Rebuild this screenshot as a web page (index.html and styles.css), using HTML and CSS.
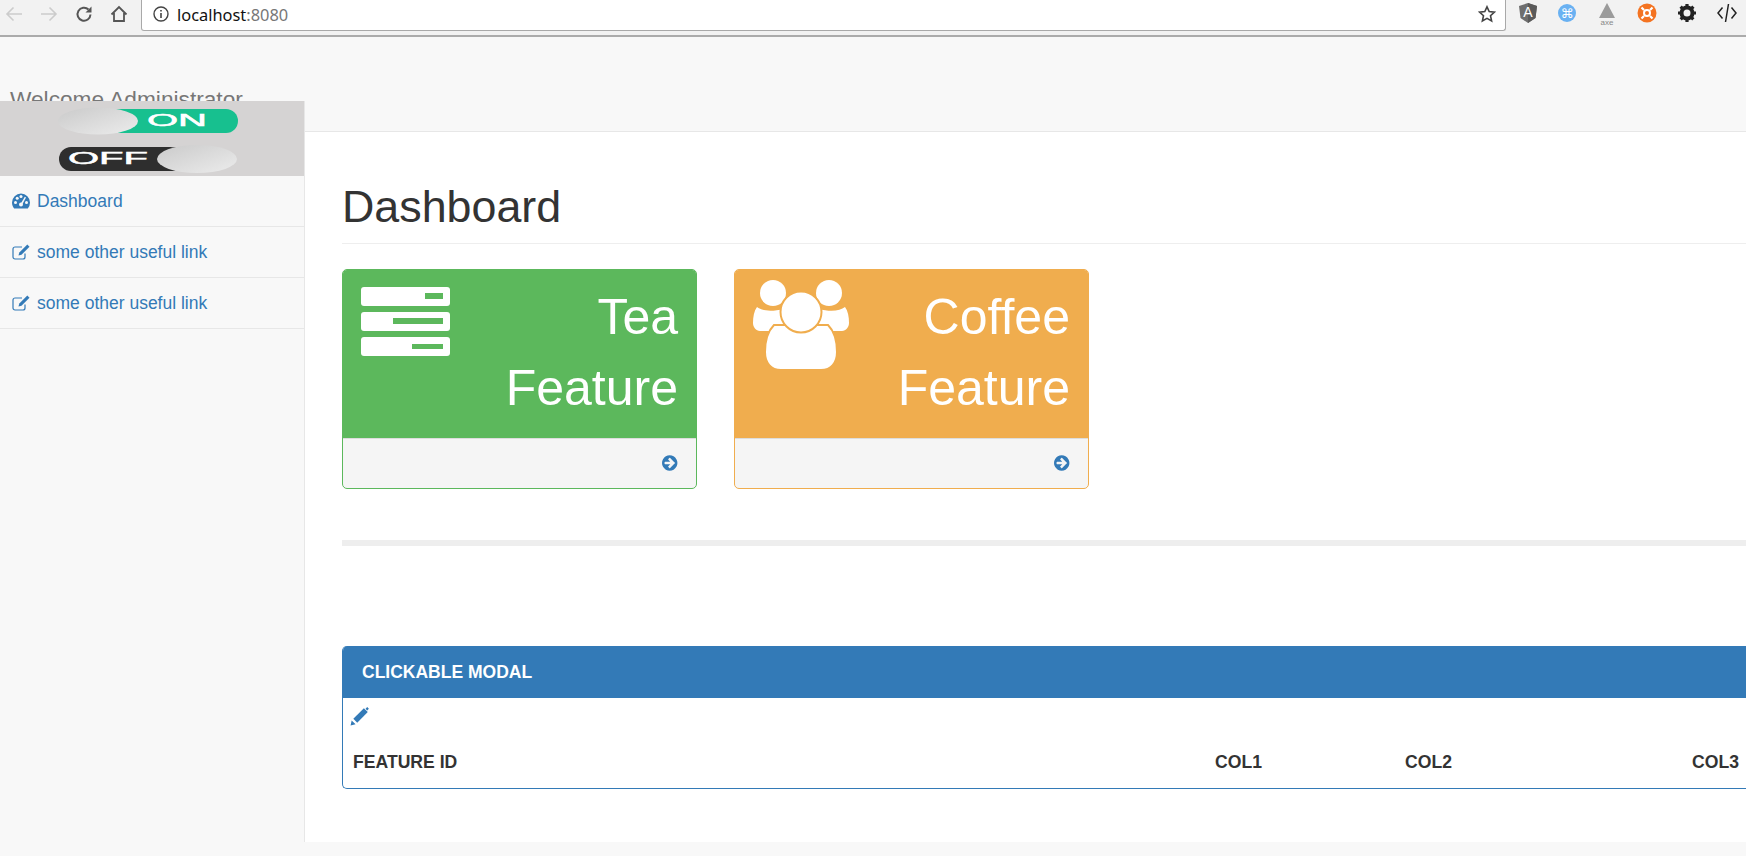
FILE: index.html
```html
<!DOCTYPE html>
<html lang="en">
<head>
    <meta charset="UTF-8">
    <meta name="viewport" content="width=device-width, initial-scale=1.0">
    <title>Dashboard</title>
    <link rel="stylesheet" href="styles.css">
</head>
<body>
    <div class="browser-bar">
        <div class="browser-nav">
            <svg width="18" height="18" viewBox="0 0 18 18"><path d="M17 9H2M8.5 2.5 2 9l6.5 6.5" fill="none" stroke="#ccc" stroke-width="1.6"/></svg>
            <svg width="18" height="18" viewBox="0 0 18 18"><path d="M1 9h15M9.5 2.5 16 9l-6.5 6.5" fill="none" stroke="#ccc" stroke-width="1.6"/></svg>
            <svg width="18" height="18" viewBox="0 0 18 18"><path d="M15.5 9.5a6.5 6.5 0 1 1-2-5" fill="none" stroke="#555" stroke-width="2"/><path d="M16.5 1.5v6h-6z" fill="#555"/></svg>
            <svg width="18" height="18" viewBox="0 0 18 18"><path d="M1.5 9.5 9 2l7.5 7.5M4 8v8h10V8" fill="none" stroke="#555" stroke-width="1.8"/></svg>
        </div>
        <div class="address-bar">
            <svg width="16" height="16" viewBox="0 0 16 16"><circle cx="8" cy="8" r="7" fill="none" stroke="#444" stroke-width="1.4"/><path d="M8 7v5M8 4v1.6" stroke="#444" stroke-width="1.6"/></svg>
            <span class="url">localhost<span class="url-port">:8080</span></span>
            <svg class="star" width="18" height="18" viewBox="0 0 18 18"><path d="m9 1.8 2.2 4.8 5.2.6-3.9 3.5 1.1 5.2L9 13.3l-4.600 2.600 1.100-5.200-3.900-3.500 5.200-.6z" fill="none" stroke="#444" stroke-width="1.6"/></svg>
        </div>
        <div class="extensions">
            <svg width="18" height="20" viewBox="0 0 18 20"><path d="M9 0 18 3l-1.5 12L9 20l-7.500-5L0 3z" fill="#6e6e6e"/><path d="M9 0 18 3l-1.5 12L9 20z" fill="#5a5a5a"/><text x="9" y="14" class="ext-letter">A</text></svg>
            <svg width="20" height="20" viewBox="0 0 20 20"><circle cx="10" cy="10" r="9" fill="#69b1f2"/><text x="10" y="14.5" class="ext-cmd">⌘</text></svg>
            <svg width="20" height="22" viewBox="0 0 20 22"><path d="M10 0 18 15H2z" fill="#9b9b9b"/><text x="10" y="21.5" class="ext-axe">axe</text></svg>
            <svg width="20" height="20" viewBox="0 0 20 20"><circle cx="10" cy="10" r="9.5" fill="#f47321"/><circle cx="10" cy="10" r="3" fill="none" stroke="#fff" stroke-width="2"/><path d="M4.5 4.5 7 7M15.5 4.5 13 7M4.5 15.5 7 13M15.5 15.5 13 13" stroke="#fff" stroke-width="2.2"/></svg>
            <svg width="20" height="20" viewBox="0 0 20 20"><circle cx="10" cy="10" r="5.5" fill="none" stroke="#222" stroke-width="4"/><path d="M10 1v18M1 10h18M3.6 3.600l12.800 12.800M16.400 3.600 3.600 16.400" stroke="#222" stroke-width="3.2" stroke-dasharray="3.5 11 3.5 50"/></svg>
            <svg width="20" height="20" viewBox="0 0 20 20"><path d="M5.5 4.5 1 10l4.5 5.5M14.500 4.500 19 10l-4.500 5.500M11.500 1 8.500 19" fill="none" stroke="#222" stroke-width="1.5"/></svg>
        </div>
    </div>

    <nav class="navbar">
        <span class="welcome">Welcome Administrator</span>
    </nav>

    <div class="wrapper">
        <aside class="sidebar">
            <div class="toggle-banner">
                <svg width="304" height="75" viewBox="0 0 304 75">
                    <defs>
                        <linearGradient id="knob" x1="0" y1="0" x2="1" y2="1">
                            <stop offset="0" stop-color="#cacaca"/>
                            <stop offset="1" stop-color="#ececec"/>
                        </linearGradient>
                    </defs>
                    <rect x="100" y="8" width="138" height="24" rx="12" fill="#17c08f"/>
                    <text x="147" y="25" class="toggle-text" textLength="60" lengthAdjust="spacingAndGlyphs">ON</text>
                    <ellipse cx="98" cy="20" rx="40" ry="13.5" fill="url(#knob)"/>
                    <rect x="59" y="46" width="140" height="24" rx="12" fill="#2e2e2e"/>
                    <text x="68" y="63" class="toggle-text" textLength="80" lengthAdjust="spacingAndGlyphs">OFF</text>
                    <ellipse cx="197" cy="58" rx="40" ry="14" fill="url(#knob)"/>
                </svg>
            </div>
            <ul class="side-menu">
                <li>
                    <a href="#">
                        <svg width="18" height="16" viewBox="0 0 18 16"><path d="M9 .5a9 9 0 0 0-9 9c0 2.300.8 4.300 2.200 6h13.600a9 9 0 0 0 2.200-6 9 9 0 0 0-9-9z" fill="#337ab7"/><g fill="#f8f8f8"><circle cx="3.5" cy="9.5" r="1.5"/><circle cx="5.2" cy="5.2" r="1.5"/><circle cx="9" cy="3.5" r="1.5"/><circle cx="14.5" cy="9.5" r="1.5"/><circle cx="9" cy="11.5" r="2"/><path d="m12.800 3.800 1.200.8-3.500 6.500-1.500-.8z"/></g></svg>
                        Dashboard
                    </a>
                </li>
                <li>
                    <a href="#">
                        <svg width="18" height="16" viewBox="0 0 18 16"><path d="M13 9.5V13a2 2 0 0 1-2 2H3a2 2 0 0 1-2-2V5a2 2 0 0 1 2-2h7" fill="none" stroke="#337ab7" stroke-width="1.2"/><path d="m15.3.5 2.200 2.200-8 8-3 .8.800-3z" fill="#337ab7"/></svg>
                        some other useful link
                    </a>
                </li>
                <li>
                    <a href="#">
                        <svg width="18" height="16" viewBox="0 0 18 16"><path d="M13 9.5V13a2 2 0 0 1-2 2H3a2 2 0 0 1-2-2V5a2 2 0 0 1 2-2h7" fill="none" stroke="#337ab7" stroke-width="1.2"/><path d="m15.3.5 2.200 2.200-8 8-3 .8.800-3z" fill="#337ab7"/></svg>
                        some other useful link
                    </a>
                </li>
            </ul>
        </aside>

        <main class="content">
            <h1 class="page-header">Dashboard</h1>

            <div class="cards">
                <div class="card card-green">
                    <div class="card-head">
                        <svg width="96" height="89" viewBox="0 0 96 89">
                            <g fill="#fff">
                                <rect x="0" y="7" width="89" height="19" rx="3"/>
                                <rect x="0" y="32" width="89" height="19" rx="3"/>
                                <rect x="0" y="57" width="89" height="19" rx="3"/>
                            </g>
                            <g fill="#5cb85c">
                                <rect x="64" y="13" width="18" height="6"/>
                                <rect x="32" y="38" width="50" height="6"/>
                                <rect x="51" y="64" width="31" height="5"/>
                            </g>
                        </svg>
                        <div class="card-title">Tea<br>Feature</div>
                    </div>
                    <a class="card-foot" href="#">
                        <svg width="18" height="18" viewBox="0 128 1792 1536"><path fill="#337ab7" d="M1285 896q0-27-18-45l-91-91-362-362q-18-18-45-18t-45 18l-91 91q-18 18-18 45t18 45l189 189h-502q-26 0-45 19t-19 45v128q0 26 19 45t45 19h502l-189 189q-19 19-19 45t19 45l91 91q18 18 45 18t45-18l362-362 91-91q18-18 18-45zm251 0q0 209-103 385.5t-279.5 279.5-385.5 103-385.5-103-279.5-279.5-103-385.5 103-385.5 279.5-279.5 385.5-103 385.5 103 279.5 279.5 103 385.5z"/></svg>
                    </a>
                </div>

                <div class="card card-orange">
                    <div class="card-head">
                        <svg width="96" height="89" viewBox="0 0 96 89">
                            <g fill="#fff" stroke="#f0ad4e" stroke-width="2">
                                <circle cx="20" cy="13" r="13" stroke="none"/>
                                <circle cx="76" cy="13" r="13" stroke="none"/>
                                <path d="M4 27C9 31 18 32 31 29V47L17 51H7C3 51 0 47 0 43 0 37 1 31 4 27Z" stroke="none"/>
                                <path d="M92 27C87 31 78 32 65 29V47L79 51H89C93 51 96 47 96 43 96 37 95 31 92 27Z" stroke="none"/>
                                <path d="M21 45H75C81 51 84 61 84 72 84 83 78 90 68 90H28C18 90 12 83 12 72 12 61 15 51 21 45Z"/>
                                <circle cx="48" cy="32" r="20.5"/>
                            </g>
                        </svg>
                        <div class="card-title">Coffee<br>Feature</div>
                    </div>
                    <a class="card-foot" href="#">
                        <svg width="18" height="18" viewBox="0 128 1792 1536"><path fill="#337ab7" d="M1285 896q0-27-18-45l-91-91-362-362q-18-18-45-18t-45 18l-91 91q-18 18-18 45t18 45l189 189h-502q-26 0-45 19t-19 45v128q0 26 19 45t45 19h502l-189 189q-19 19-19 45t19 45l91 91q18 18 45 18t45-18l362-362 91-91q18-18 18-45zm251 0q0 209-103 385.5t-279.5 279.5-385.5 103-385.5-103-279.5-279.5-103-385.5 103-385.5 279.5-279.5 385.5-103 385.5 103 279.5 279.5 103 385.5z"/></svg>
                    </a>
                </div>
            </div>

            <hr class="divider">

            <section class="panel">
                <div class="panel-heading">CLICKABLE MODAL</div>
                <div class="panel-body">
                    <svg class="edit-icon" width="20" height="20" viewBox="0 0 18 18"><path d="M.5 17.5l1-4.500 3.500 3.500zM14 2.500 15.500 1 17 2.500 15.500 4z" fill="#337ab7"/><path d="M3 11.500 12.500 2l3.500 3.500L6.500 15z" fill="#337ab7"/></svg>
                    <table class="data-table">
                        <thead>
                            <tr>
                                <th class="col-id">FEATURE ID</th>
                                <th class="col-1">COL1</th>
                                <th class="col-2">COL2</th>
                                <th>COL3</th>
                            </tr>
                        </thead>
                    </table>
                </div>
            </section>
        </main>
    </div>
</body>
</html>
```

FILE: styles.css
```css
* {
    margin: 0;
    padding: 0;
    box-sizing: border-box;
}

html, body {
    height: 856px;
    overflow: hidden;
}

body {
    background-color: #f8f8f8;
    color: #333;
    font-family: "Liberation Sans", Arial, sans-serif;
    font-size: 17.5px;
}

a {
    color: #337ab7;
    text-decoration: none;
}

/* browser chrome */
.browser-bar {
    display: flex;
    height: 37px;
    background-color: #f2f2f2;
    border-bottom: 2px solid #ababab;
}

.browser-nav {
    display: flex;
    width: 141px;
    padding: 5px 0 0 5px;
    gap: 17px;
}

.address-bar {
    display: flex;
    align-items: center;
    width: 1365px;
    height: 31px;
    background-color: #fff;
    border: 1px solid #a9a9a9;
    border-top: none;
    border-radius: 0 0 3px 3px;
    padding: 0 9px 2px 11px;
}

.url {
    font-family: "Noto Sans", sans-serif;
    font-size: 16.4px;
    color: #111;
    margin-left: 8px;
}

.url-port {
    color: #777;
}

.star {
    margin-left: auto;
}

.extensions {
    display: flex;
    align-items: flex-start;
    gap: 20px;
    padding: 3px 0 0 13px;
}

.ext-letter {
    font-family: "Liberation Sans", sans-serif;
    font-size: 14px;
    fill: #fff;
    text-anchor: middle;
}

.ext-cmd {
    font-family: "DejaVu Sans", sans-serif;
    font-size: 13px;
    fill: #fff;
    text-anchor: middle;
}

.ext-axe {
    font-family: "Liberation Sans", sans-serif;
    font-size: 8px;
    fill: #888;
    text-anchor: middle;
}

/* top navbar */
.navbar {
    height: 95px;
    background-color: #f8f8f8;
    border-bottom: 1px solid #e7e7e7;
    padding: 49px 0 0 10px;
}

.welcome {
    font-size: 22.7px;
    line-height: 26px;
    color: #777;
}

/* sidebar + content */
.wrapper {
    display: flex;
    height: 710px;
}

.sidebar {
    position: relative;
    flex: 0 0 305px;
    margin-top: -31px;
    background-color: #f8f8f8;
    border-right: 1px solid #e7e7e7;
}

.toggle-banner {
    height: 75px;
    background-color: #d5d3d3;
}

.toggle-banner svg {
    display: block;
}

.toggle-text {
    font-family: "Liberation Sans", sans-serif;
    font-size: 17px;
    fill: #fff;
    stroke: #fff;
    stroke-width: 0.5;
}

.side-menu {
    list-style: none;
}

.side-menu li {
    height: 51px;
    border-bottom: 1px solid #e7e7e7;
}

.side-menu a {
    display: flex;
    align-items: center;
    gap: 7px;
    height: 50px;
    padding-left: 12px;
    font-size: 17.5px;
}

.content {
    flex: 1;
    min-width: 0;
    background-color: #fff;
    padding-left: 37px;
}

.page-header {
    height: 112px;
    padding-top: 50px;
    font-size: 44.8px;
    line-height: 49px;
    font-weight: 400;
    border-bottom: 1px solid #eee;
}

/* feature cards */
.cards {
    display: flex;
    gap: 37px;
    margin-top: 25px;
}

.card {
    width: 355px;
    height: 220px;
    border: 1px solid;
    border-radius: 5px;
    overflow: hidden;
    background-color: #f5f5f5;
}

.card-green {
    border-color: #5cb85c;
}

.card-orange {
    border-color: #f0ad4e;
}

.card-head {
    display: flex;
    justify-content: space-between;
    height: 168px;
    padding: 10px 18px 0 18px;
    color: #fff;
}

.card-green .card-head {
    background-color: #5cb85c;
}

.card-orange .card-head {
    background-color: #f0ad4e;
}

.card-title {
    font-size: 50px;
    line-height: 71px;
    text-align: right;
    margin-top: 2px;
}

.card-foot {
    display: flex;
    justify-content: flex-end;
    height: 50px;
    padding: 15px 16px 0 0;
    border-top: 1px solid #ddd;
}

.divider {
    height: 6px;
    margin-top: 51px;
    border: none;
    background-color: #eee;
}

/* panel */
.panel {
    height: 143px;
    margin-top: 100px;
    border-left: 1px solid #337ab7;
    border-bottom: 1px solid #337ab7;
    border-radius: 5px 0 0 5px;
    overflow: hidden;
}

.panel-heading {
    height: 52px;
    margin-left: -1px;
    padding: 16px 0 0 20px;
    background-color: #337ab7;
    color: #fff;
    font-size: 17.5px;
    line-height: 20px;
    font-weight: 700;
}

.panel-body {
    height: 90px;
    border-bottom: 3px solid #ccc;
}

.edit-icon {
    display: block;
    margin: 8px 0 0 7px;
}

.data-table {
    width: 100%;
    border-collapse: collapse;
    table-layout: fixed;
    margin-top: 25px;
}

.data-table th {
    text-align: left;
    font-size: 17.6px;
    line-height: 22px;
    font-weight: 700;
}

.col-id {
    width: 872px;
    padding-left: 10px;
}

.col-1 {
    width: 190px;
}

.col-2 {
    width: 287px;
}
```
